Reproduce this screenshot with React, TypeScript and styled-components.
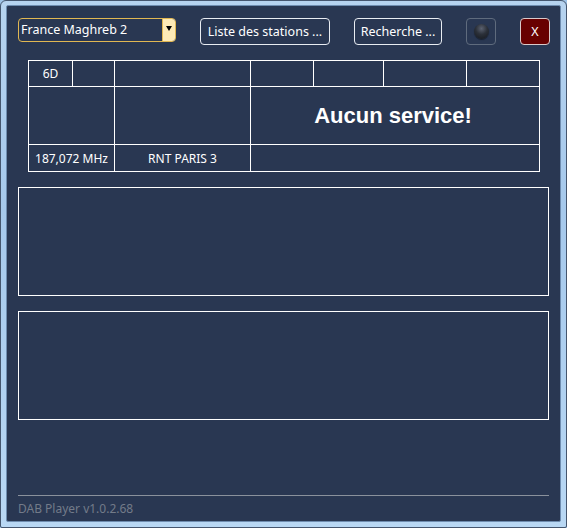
import React from "react";
import styled, { createGlobalStyle } from "styled-components";

const Global = createGlobalStyle`
  html, body { margin: 0; padding: 0; background: #9fc3e6; }
  * { box-sizing: border-box; }
`;

const Frame = styled.div`
  width: 567px;
  height: 528px;
  padding: 4px 5px 5px 5px;
  background: linear-gradient(180deg, #b6d3ef 0%, #a6c9ec 40%, #b9d8f4 100%);
  border: 1px solid #45566e;
  border-radius: 6px 6px 2px 2px;
  display: flex;
`;

const Panel = styled.div`
  flex: 1;
  min-width: 0;
  display: flex;
  flex-direction: column;
  background: #293752;
  border: 1px solid #6f8db0;
  border-radius: 2px;
  padding: 12px 11px 0 11px;
  font-family: "Noto Sans", "Open Sans", sans-serif;
  color: #ffffff;
`;

const Toolbar = styled.div`
  display: flex;
  align-items: flex-start;
  gap: 24px;
`;

const Select = styled.div`
  width: 158px;
  height: 24px;
  border: 1px solid #e1b752;
  border-radius: 4px;
  display: flex;
  overflow: hidden;
  flex-shrink: 0;
`;

const SelectText = styled.div`
  flex: 1;
  font-size: 12.5px;
  line-height: 22px;
  padding-left: 2px;
  white-space: nowrap;
`;

const SelectArrow = styled.div`
  width: 13px;
  background: #fdeab6;
  border-left: 1px solid #e1b752;
  display: flex;
  align-items: center;
  justify-content: center;
  &::after {
    content: "";
    width: 0;
    height: 0;
    border-left: 3px solid transparent;
    border-right: 3px solid transparent;
    border-top: 5px solid #000;
    margin-top: -3px;
  }
`;

const Button = styled.div<{ $w: number; $danger?: boolean }>`
  width: ${(p) => p.$w}px;
  height: 27px;
  border: 1px solid ${(p) => (p.$danger ? "#d9c9c9" : "#e8ecf2")};
  border-radius: 4px;
  background: ${(p) => (p.$danger ? "#680000" : "transparent")};
  font-size: 12.5px;
  display: flex;
  align-items: center;
  justify-content: center;
  white-space: nowrap;
  flex-shrink: 0;
`;

const LedButton = styled.div`
  width: 30px;
  height: 27px;
  border: 1px solid #5f6b7d;
  border-radius: 4px;
  display: flex;
  align-items: center;
  justify-content: center;
  flex-shrink: 0;
`;

const Led = styled.div`
  width: 15px;
  height: 15px;
  border-radius: 50%;
  background: radial-gradient(circle at 50% 30%, #5a6170 0%, #2b3039 45%, #14171c 100%);
  box-shadow: 0 1px 1px rgba(0, 0, 0, 0.4);
`;

const Grid = styled.div`
  margin: 15px 9px 0 10px;
  display: grid;
  grid-template-columns: 44px 42px 136px 63px 70px 83px 73px;
  grid-template-rows: 26px 58px 27px;
  border-left: 1px solid #fff;
  border-top: 1px solid #fff;
`;

const Cell = styled.div<{ $span?: number; $big?: boolean }>`
  grid-column: span ${(p) => p.$span || 1};
  border-right: 1px solid #fff;
  border-bottom: 1px solid #fff;
  display: flex;
  align-items: center;
  justify-content: center;
  font-size: ${(p) => (p.$big ? "22px" : "12px")};
  font-family: ${(p) => (p.$big ? '"Liberation Sans", Arial, sans-serif' : "inherit")};
  font-weight: ${(p) => (p.$big ? 700 : 400)};
  padding-right: ${(p) => (p.$big ? "4px" : "0")};
  white-space: nowrap;
`;

const Box = styled.div`
  margin-top: 15px;
  height: 109px;
  border: 1px solid #fff;
`;

const Spacer = styled.div`
  flex: 1;
`;

const Footer = styled.div`
  border-top: 1px solid #8a919c;
  padding-top: 4px;
  height: 26px;
  font-size: 12px;
  color: #737b89;
`;

export default function App() {
  return (
    <>
      <Global />
      <Frame>
        <Panel>
          <Toolbar>
            <Select>
              <SelectText>France Maghreb 2</SelectText>
              <SelectArrow />
            </Select>
            <Button $w={130}>Liste des stations ...</Button>
            <Button $w={88}>Recherche ...</Button>
            <LedButton>
              <Led />
            </LedButton>
            <Button $w={30} $danger>
              X
            </Button>
          </Toolbar>
          <Grid>
            <Cell>6D</Cell>
            <Cell />
            <Cell />
            <Cell />
            <Cell />
            <Cell />
            <Cell />
            <Cell $span={2} />
            <Cell />
            <Cell $span={4} $big>
              Aucun service!
            </Cell>
            <Cell $span={2}>187,072 MHz</Cell>
            <Cell>RNT PARIS 3</Cell>
            <Cell $span={4} />
          </Grid>
          <Box />
          <Box />
          <Spacer />
          <Footer>DAB Player v1.0.2.68</Footer>
        </Panel>
      </Frame>
    </>
  );
}
